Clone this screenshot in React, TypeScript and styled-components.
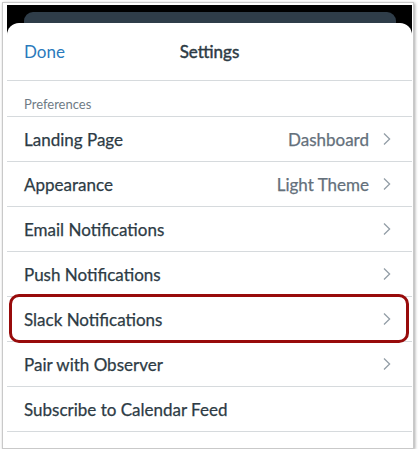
import styled, { createGlobalStyle } from 'styled-components'

const GlobalStyle = createGlobalStyle`
  html, body {
    margin: 0;
    padding: 0;
    background: #ffffff;
  }
  body {
    font-family: Lato, "Open Sans", "Liberation Sans", sans-serif;
  }
`

const Frame = styled.div`
  margin: 2px 0 0 2px;
  width: 405px;
  height: 441px;
  padding: 2px 1px 2px 4px;
  border: 1px solid #c9c9c9;
  box-shadow: 1px 1px 3px rgba(0, 0, 0, 0.35);
  overflow: hidden;
`

const Screen = styled.div`
  display: flex;
  flex-direction: column;
  height: 100%;
  background: #000000;
  padding-top: 7px;
  box-sizing: border-box;
`

const BehindCard = styled.div`
  height: 22px;
  margin: 0 16px -11px 17px;
  background: #2f3d49;
  border-radius: 9px;
`

const Sheet = styled.div`
  position: relative;
  flex: 1;
  background: #ffffff;
  border-radius: 12px 12px 0 0;
  display: flex;
  flex-direction: column;
`

const Header = styled.div`
  display: grid;
  grid-template-columns: 1fr auto 1fr;
  align-items: center;
  height: 57px;
  padding: 0 17px;
  border-bottom: 1px solid #d6dadd;
`

const Done = styled.span`
  font-size: 17px;
  color: #2b7abc;
`

const Title = styled.span`
  font-size: 17px;
  color: #2d3b45;
  -webkit-text-stroke: 0.45px #2d3b45;
`

const SectionLabel = styled.div`
  height: 36px;
  box-sizing: border-box;
  padding: 15px 17px 0;
  font-size: 13px;
  color: #6f7b86;
  border-bottom: 1px solid #d6dadd;
`

const Row = styled.div<{ $highlight?: boolean }>`
  position: relative;
  display: flex;
  align-items: center;
  height: 44px;
  padding: 0 21px 0 17px;
  border-bottom: 1px solid #d6dadd;
  font-size: 17px;
  color: #2d3b45;
  -webkit-text-stroke: 0.25px currentColor;

  ${(p) =>
    p.$highlight &&
    `
    &::after {
      content: '';
      position: absolute;
      top: -3px;
      bottom: -2px;
      left: 2px;
      right: 3px;
      border: 3px solid #980b0b;
      border-radius: 10px;
      pointer-events: none;
    }
  `}
`

const Label = styled.span`
  flex: 1;
`

const Value = styled.span`
  color: #64707b;
  margin-right: 14px;
`

const Chevron = () => (
  <svg width="8" height="14" viewBox="0 0 8 14" fill="none">
    <path d="M1 1.5 L6.6 7 L1 12.5" stroke="#939ea7" strokeWidth="1.3" />
  </svg>
)

const rows: { label: string; value?: string; chevron: boolean; highlight?: boolean }[] = [
  { label: 'Landing Page', value: 'Dashboard', chevron: true },
  { label: 'Appearance', value: 'Light Theme', chevron: true },
  { label: 'Email Notifications', chevron: true },
  { label: 'Push Notifications', chevron: true },
  { label: 'Slack Notifications', chevron: true, highlight: true },
  { label: 'Pair with Observer', chevron: true },
  { label: 'Subscribe to Calendar Feed', chevron: false },
]

export default function App() {
  return (
    <>
      <GlobalStyle />
      <Frame>
        <Screen>
          <BehindCard />
          <Sheet>
            <Header>
              <Done>Done</Done>
              <Title>Settings</Title>
              <span />
            </Header>
            <SectionLabel>Preferences</SectionLabel>
            {rows.map((r) => (
              <Row key={r.label} $highlight={r.highlight}>
                <Label>{r.label}</Label>
                {r.value && <Value>{r.value}</Value>}
                {r.chevron && <Chevron />}
              </Row>
            ))}
          </Sheet>
        </Screen>
      </Frame>
    </>
  )
}
